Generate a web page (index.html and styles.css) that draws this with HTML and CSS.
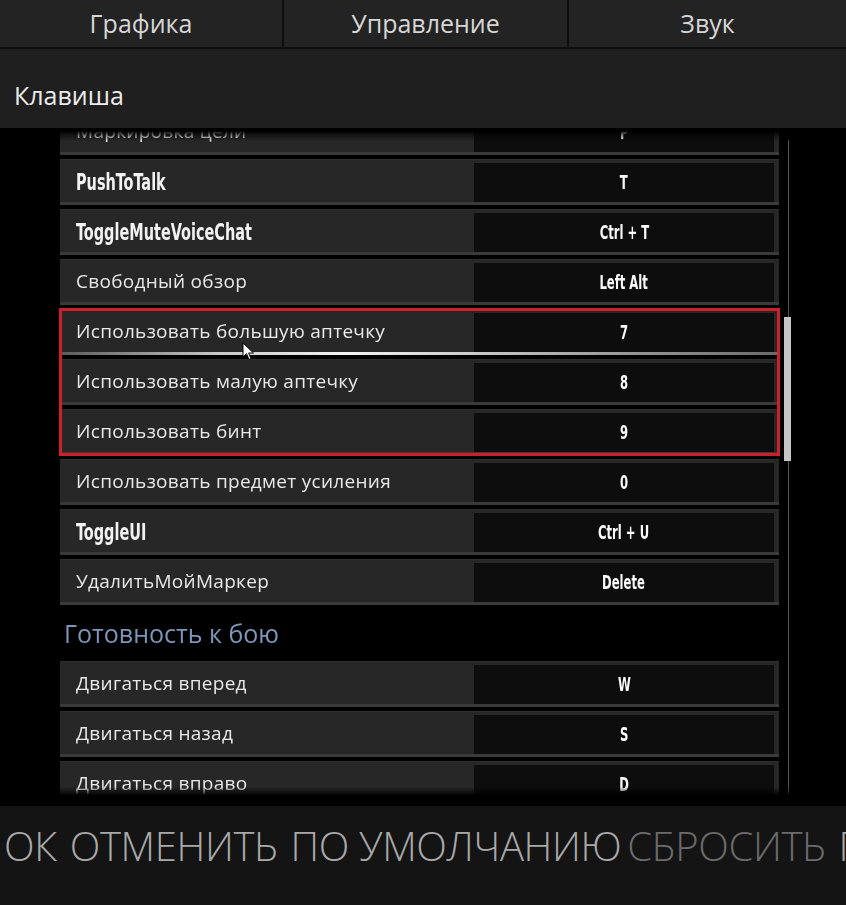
FILE: index.html
```html
<!DOCTYPE html>
<html lang="ru">
<head>
  <meta charset="UTF-8">
  <meta name="viewport" content="width=device-width, initial-scale=1.0">
  <title>Управление</title>
  <link rel="stylesheet" href="styles.css">
</head>
<body>
  <!-- Tabs -->
  <div class="tabs">
    <div class="tab">Графика</div>
    <div class="tab">Управление</div>
    <div class="tab">Звук</div>
  </div>

  <div class="section-head">Клавиша</div>

  <!-- Key bindings -->
  <div class="viewport">
    <div class="list">
      <div class="row"><span class="label">Маркировка цели</span><span class="key"><span class="narrow">P</span></span></div>
      <div class="row"><span class="label code"><span class="narrow">PushToTalk</span></span><span class="key"><span class="narrow">T</span></span></div>
      <div class="row"><span class="label code"><span class="narrow">ToggleMuteVoiceChat</span></span><span class="key"><span class="narrow">Ctrl + T</span></span></div>
      <div class="row"><span class="label">Свободный обзор</span><span class="key"><span class="narrow">Left Alt</span></span></div>
      <div class="group">
        <div class="row hover"><span class="label">Использовать большую аптечку</span><span class="key"><span class="narrow">7</span></span></div>
        <div class="row"><span class="label">Использовать малую аптечку</span><span class="key"><span class="narrow">8</span></span></div>
        <div class="row"><span class="label">Использовать бинт</span><span class="key"><span class="narrow">9</span></span></div>
        <svg class="cursor" width="13" height="19" viewBox="0 0 13 19">
          <path d="M1 1 L1 15 L4.5 11.5 L7 17.5 L9 16.6 L6.6 11 L11.5 11 Z" fill="#fff" stroke="#000" stroke-width="1"/>
        </svg>
      </div>
      <div class="row"><span class="label">Использовать предмет усиления</span><span class="key"><span class="narrow">0</span></span></div>
      <div class="row"><span class="label code"><span class="narrow">ToggleUI</span></span><span class="key"><span class="narrow">Ctrl + U</span></span></div>
      <div class="row"><span class="label">УдалитьМойМаркер</span><span class="key"><span class="narrow">Delete</span></span></div>

      <h2 class="category">Готовность к бою</h2>

      <div class="row"><span class="label">Двигаться вперед</span><span class="key"><span class="narrow">W</span></span></div>
      <div class="row"><span class="label">Двигаться назад</span><span class="key"><span class="narrow">S</span></span></div>
      <div class="row"><span class="label">Двигаться вправо</span><span class="key"><span class="narrow">D</span></span></div>
      <div class="row"><span class="label">Двигаться влево</span><span class="key"><span class="narrow">A</span></span></div>
    </div>
    <div class="scrollbar"><div class="thumb"></div></div>
  </div>

  <!-- Footer buttons -->
  <div class="footer">
    <span class="btn">ОК</span>
    <span class="btn">ОТМЕНИТЬ</span>
    <span class="btn">ПО УМОЛЧАНИЮ</span>
    <span class="btn dim">СБРОСИТЬ</span>
    <span class="btn">ПРИМЕНИТЬ</span>
  </div>
</body>
</html>
```

FILE: styles.css
```css
body {
  margin: 0;
  background: #000;
  color: #e4e4e4;
  font-family: "Open Sans", "Noto Sans", sans-serif;
  overflow: hidden;
}

/* Tabs */
.tabs {
  display: flex;
  height: 47px;
  background: #232323;
  border-bottom: 2px solid #0e0e0e;
}

.tab {
  flex: 0 0 285px;
  box-sizing: border-box;
  text-align: center;
  line-height: 47px;
  font-size: 25px;
  color: #d6d6d6;
  border-right: 2px solid #0e0e0e;
}

.tab:first-child {
  flex-basis: 284px;
}

.tab:last-child {
  flex: 1;
  border-right: none;
}

.section-head {
  height: 79px;
  box-sizing: border-box;
  padding: 26px 0 0 14px;
  background: #1f1f1f;
  font-size: 25px;
  line-height: 40px;
  color: #ececec;
}

/* Scroll area */
.viewport {
  display: flex;
  height: 667px;
  overflow: hidden;
  padding-left: 60px;
  margin-bottom: 11px;
  -webkit-mask-image: linear-gradient(to bottom, transparent 0, transparent 3px, rgba(0,0,0,0.5) 7px, #000 13px, #000 659px, transparent 668px);
  mask-image: linear-gradient(to bottom, transparent 0, transparent 3px, rgba(0,0,0,0.5) 7px, #000 13px, #000 659px, transparent 668px);
}

.list {
  width: 719px;
  margin-top: -19px;
  display: flex;
  flex-direction: column;
  gap: 4px;
}

.row {
  display: flex;
  align-items: stretch;
  height: 46px;
  flex: none;
  box-sizing: border-box;
  background: #272727;
  border-top: 1px solid #2e2e2e;
  border-bottom: 3px solid #3a3a3a;
}

.row.hover {
  border-bottom: 3px solid;
  border-image: linear-gradient(to right, #5a5a5a, #c8c8c8 22%, #f4f4f4 40%, #a0a0a0 75%, #6a6a6a) 1;
}

.label {
  flex: 1;
  padding-left: 16px;
  font-size: 19px;
  letter-spacing: 0.3px;
  line-height: 42px;
  color: #e8e8e8;
  white-space: nowrap;
}

.narrow {
  display: inline-block;
  transform: scaleX(0.7);
  transform-origin: left center;
  font-family: "DejaVu Sans Condensed", "DejaVu Sans", sans-serif;
  font-weight: 700;
  letter-spacing: 0;
  white-space: nowrap;
}

.label.code {
  font-size: 23px;
  color: #f2f2f2;
}

.key {
  width: 300px;
  margin: 3px 5px 0 0;
  background: #0d0d0d;
  text-align: center;
  font-size: 19px;
  line-height: 38px;
  color: #fafafa;
}

.key .narrow {
  transform: scaleX(0.68);
  transform-origin: center center;
}

.group {
  position: relative;
  display: flex;
  flex-direction: column;
  gap: 4px;
  flex: none;
  outline: 3px solid #cf1f2c;
  outline-offset: -2px;
}

.cursor {
  position: absolute;
  left: 182px;
  top: 33px;
}

.category {
  margin: 4px 0 4px 4px;
  font-size: 25px;
  font-weight: 400;
  line-height: 40px;
  color: #7d95b8;
}

/* Scrollbar */
.scrollbar {
  width: 7px;
  margin: 12px 0 0 5px;
  background: linear-gradient(to right, transparent 4px, #555 4px, #555 5px, transparent 5px);
}

.thumb {
  height: 144px;
  margin-top: 177px;
  background: #c6c6c6;
}

/* Footer */
.footer {
  display: flex;
  gap: 13px;
  height: 99px;
  box-sizing: border-box;
  padding: 15px 0 0 4px;
  background: #141414;
  white-space: nowrap;
  overflow: hidden;
}

.btn {
  flex: none;
  font-size: 40px;
  font-weight: 300;
  letter-spacing: -0.35px;
  line-height: 50px;
  color: #a9a9a9;
}

.btn.dim {
  margin-left: -7px;
  color: #6b6b6b;
}
```
